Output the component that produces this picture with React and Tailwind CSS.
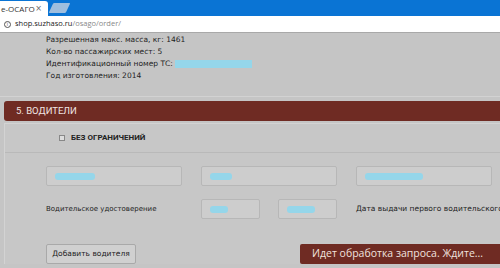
const Field = ({ children, className = "" }) => (
  <div className={"flex items-center rounded-[2px] border border-[#b7b7b7] bg-[#cdcdcd] px-2 " + className}>
    {children}
  </div>
);

const Info = ({ children }) => <div className="h-[12px] leading-[12px]">{children}</div>;

export default function App() {
  return (
    <div className="h-[268px] w-[500px] overflow-hidden bg-[#c5c5c5] text-[#1e1e1e] [font-family:'DejaVu_Sans',sans-serif]">
      {/* browser chrome */}
      <div className="flex h-[16px] items-end bg-[#0a74d4]">
        <div className="flex h-[15px] w-[48px] items-center justify-between rounded-tr-[3px] bg-white pl-[1px] pr-[6px] text-[8px] text-[#333]">
          <span className="[font-family:'Open_Sans',sans-serif]">e-ОСАГО</span>
          <span className="text-[8px] text-[#666]">×</span>
        </div>
        <div className="ml-[3px] h-[10px] w-[17px] -skew-x-[25deg] self-center rounded-[1px] bg-[#9fbede]" />
      </div>
      <div className="flex h-[17px] items-center gap-[4px] border-b border-[#a9a9a9] bg-white pl-[4px] text-[7.5px] [font-family:'Open_Sans',sans-serif]">
        <span className="flex h-[7px] w-[7px] items-center justify-center rounded-full border border-[#555] text-[5px] leading-none text-[#555]">i</span>
        <span className="text-[#222]">
          shop.suzhaso.ru<span className="text-[#888]">/osago/order/</span>
        </span>
      </div>

      {/* vehicle info */}
      <div className="h-[64px] border-b border-[#d2d2d2] pl-[46px] pt-[1px] text-[7.5px]">
        <Info>Разрешенная макс. масса, кг: 1461</Info>
        <Info>Кол-во пассажирских мест: 5</Info>
        <Info>
          <span className="flex items-center gap-[2px]">
            Идентификационный номер ТС:
            <span className="inline-block h-[8px] w-[77px] bg-[#95d6ea]" />
          </span>
        </Info>
        <Info>Год изготовления: 2014</Info>
      </div>

      {/* drivers */}
      <div className="mt-[4px] pl-[4px]">
        <div className="flex h-[20px] items-center rounded-l-[3px] bg-[#6f2b23] pl-[12px] text-[9.5px] text-[#f1e6e4] [font-family:'Roboto',sans-serif]">
          5. ВОДИТЕЛИ
        </div>
        <div className="mt-[2px] border-l border-t border-[#d3d3d3] bg-[#c7c7c7]">
          <div className="flex h-[29px] items-center gap-[6px] border-b border-[#b9b9b9] pl-[54px]">
            <span className="h-[6px] w-[6px] border border-[#888] bg-[#ddd]" />
            <span className="text-[8px] font-bold text-[#222] [font-family:'Roboto',sans-serif]">БЕЗ ОГРАНИЧЕНИЙ</span>
          </div>

          <div className="grid grid-cols-[136px_136px_auto] gap-x-[19px] pl-[41px] pt-[13px]">
            <Field className="h-[20px]">
              <span className="h-[7px] w-[40px] rounded-[3px] bg-[#95d6ea]" />
            </Field>
            <Field className="h-[20px]">
              <span className="h-[7px] w-[22px] rounded-[3px] bg-[#95d6ea]" />
            </Field>
            <Field className="h-[20px] w-[136px]">
              <span className="h-[7px] w-[58px] rounded-[3px] bg-[#95d6ea]" />
            </Field>

            <div className="mt-[13px] flex h-[20px] items-center text-[7px]">Водительское удостоверение</div>
            <div className="mt-[13px] flex gap-[18px]">
              <Field className="h-[20px] w-[59px]">
                <span className="h-[7px] w-[18px] rounded-[3px] bg-[#95d6ea]" />
              </Field>
              <Field className="h-[20px] w-[59px]">
                <span className="h-[7px] w-[28px] rounded-[3px] bg-[#95d6ea]" />
              </Field>
            </div>
            <div className="mt-[13px] flex h-[20px] items-center whitespace-nowrap text-[7.5px]">
              Дата выдачи первого водительского
            </div>
          </div>

          <div className="flex items-center justify-between pl-[41px] pt-[25px]">
            <button className="h-[20px] w-[90px] rounded-[2px] border border-[#a9a9a9] bg-[#d0d0d0] text-[7.5px] text-[#222]">
              Добавить водителя
            </button>
            <div className="flex h-[20px] w-[200px] items-center rounded-l-[2px] bg-[#6f2b23] pl-[12px] text-[10.5px] whitespace-nowrap text-[#efe2df] [font-family:'Open_Sans',sans-serif]">
              Идет обработка запроса. Ждите...
            </div>
          </div>
        </div>
      </div>
    </div>
  );
}
